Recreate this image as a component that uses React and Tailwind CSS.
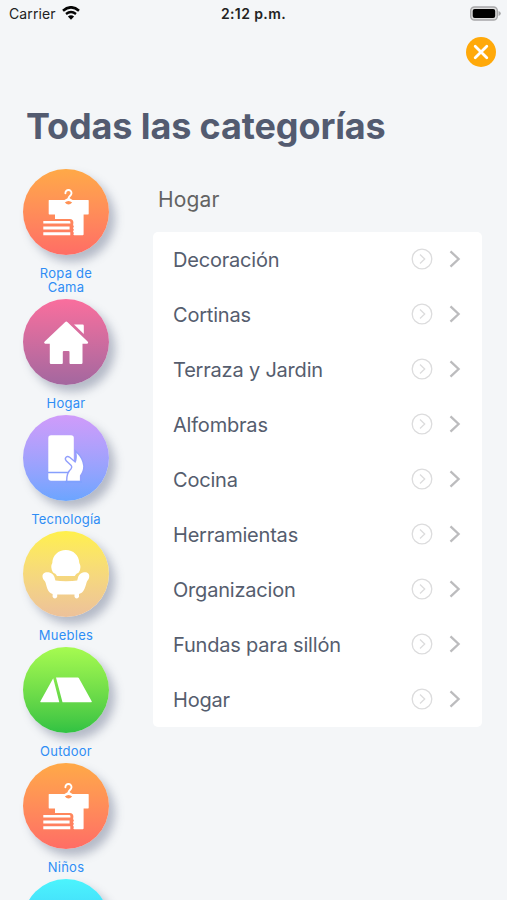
import React from "react";

/* ----------------------------------------------------------------------------------------------------- */
/*  @ Category Icons : drawn on the 86x86 circle
/* ----------------------------------------------------------------------------------------------------- */
const ClothesIcon = () => (
  <svg viewBox="0 0 86 86" className="size-full" fill="#fff">
    <path d="M26 31h39.200q.5 0 .5.500v13.300q0 .6-.6.600h-4.500v19.900q0 .9-.9.900h-8.400q-.9 0-.9-1l.5-1.300-.9-1.500.9-1.600-.9-1.600.9-1.600-.8-1.600.3-2.300q-.1-3.600-3.500-3.600H32v-4.700h-5.700q-.6 0-.6-.6V31.500q0-.5.300-.5z" />
    <path d="M20.300 51.900h25.900q1.200 0 1.200 1.200v1.300H20.300zM20.300 57.400h26.300v3H20.300zM20.300 63.200h27v3h-27z" />
    <path
      d="M42.400 24.200c0-4.500 6.300-4.100 6.100 0-.1 2.900-3 2.800-3.100 5.600l-3.900 2.200"
      fill="none"
      stroke="#fff"
      strokeWidth="1.900"
      strokeLinecap="round"
      strokeLinejoin="round"
    />
    <path d="M45.400 29.600l4.200 2.400" stroke="#fff" strokeWidth="1.700" />
    <path d="M41.800 33.500q3.700-3.200 7.400 0-3.700 4.200-7.400 0z" fill="#ff9154" />
  </svg>
);

const HouseIcon = () => (
  <svg viewBox="0 0 86 86" className="size-full" fill="#fff">
    <path d="M42 23.200q1.300-1.200 2.600 0l20 19.400q1.400 1.900-.8 2.200h-4.300v19q0 1.200-1.200 1.200H47.500q-1 0-1-1V52.900q0-1-1-1h-4.700q-1 0-1 1V64q0 1-1 1H28q-1.200 0-1.200-1.200v-19h-4.500q-2-.5-.6-2.200z" />
    <path d="M51 25.500h8.600q1.200 0 1.200 1.200V35z" />
  </svg>
);

const PhoneIcon = () => (
  <svg viewBox="0 0 86 86" className="size-full" fill="#fff">
    <rect x="25.300" y="20.200" width="25.500" height="45.600" rx="2.800" />
    <path d="M25 57.500h20" stroke="#869ffd" strokeWidth="1.500" />
    {/* hand, outlined in the circle color so it reads in front of the phone */}
    <path
      d="M44.400 65.800q-.2-7.800 4.200-11.600 1.800-2.200.1-4.100l-5-4.900c-1.600-2 .4-4 2.500-2.400l6.200 5.300q2.200-4.300 1.100-10.100 5.900 5.500 6.700 13.100-.1 5.700-3.300 9.400v5.300z"
      stroke="#929ffc"
      strokeWidth="2.800"
      paintOrder="stroke"
    />
    <path d="M42 65.900h17v2H42z" fill="#7fa1fe" />
  </svg>
);

const ArmchairIcon = () => (
  <svg viewBox="0 0 86 86" className="size-full" fill="#fff">
    <path d="M30 41.400q-3.200-5.200-.7-9.300c.2-7.600 6-13 13.500-13s13.300 5.400 13.500 13q2.700 4.300-.5 9.300-3.200 1.100-4 3.700H34q-.8-2.600-4-3.700z" />
    <path d="M19.600 46.400c-1.300-7.200 10.400-6.300 12 .2l.8 2.900q4 .7 10.600.7 7.200 0 11.200-.7l.8-3c1.700-6.500 12.500-7.300 11.200-.2-.3 2.200-2 3-2.700 5.400-1.500 5.200-2.500 9.800-7.500 11.300v2.700q-.6 1.700-2.300 1.700t-2.200-1.700v-2.200H34.200v2.300q-.6 1.600-2.300 1.600t-2.300-1.700V63c-5-1.600-5.600-6.500-7-11.300-.6-2.200-2.600-3.100-3-5.300z" />
  </svg>
);

const TentIcon = () => (
  <svg viewBox="0 0 86 86" className="size-full" fill="#fff">
    <path d="M30.200 31.200L17.300 54.500q-.3.700.5.700h18.500zM33 30.400h21.900q.6 0 .9.500l12.900 23.400q.4.900-.6.900H39.500z" />
  </svg>
);

const CATEGORIES = [
  { name: "Ropa de Cama", Icon: ClothesIcon, color: "from-[#ffa947] to-[#ff6d65]" },
  { name: "Hogar", Icon: HouseIcon, color: "from-[#fa6e9d] to-[#a3679f]" },
  { name: "Tecnología", Icon: PhoneIcon, color: "from-[#d09bfa] to-[#6ba5ff]" },
  { name: "Muebles", Icon: ArmchairIcon, color: "from-[#fff04b] to-[#edc19a]" },
  { name: "Outdoor", Icon: TentIcon, color: "from-[#a6fb50] to-[#2fc243]" },
  { name: "Niños", Icon: ClothesIcon, color: "from-[#ffa947] to-[#ff6d65]" },
  { name: "", Icon: null, color: "from-[#4cf4fd] to-[#38b6f5]" },
];

const SUBCATEGORIES = [
  "Decoración",
  "Cortinas",
  "Terraza y Jardin",
  "Alfombras",
  "Cocina",
  "Herramientas",
  "Organizacion",
  "Fundas para sillón",
  "Hogar",
];

/* ----------------------------------------------------------------------------------------------------- */
/*  @ Status Bar
/* ----------------------------------------------------------------------------------------------------- */
const StatusBar = () => (
  <div className="grid h-[26px] shrink-0 grid-cols-3 items-center pl-[9px] pr-[6px] text-[14px] text-[#222]">
    <div className="flex items-center gap-[6px]">
      <span className="tracking-[0.1px]">Carrier</span>
      <svg width="18" height="14" viewBox="0 0 18 14" fill="none" stroke="#050505">
        <path d="M1 4.700q8-6.800 16 0" strokeWidth="2.600" />
        <path d="M4 8q5-4 10 0" strokeWidth="2.300" />
        <path d="M9 13.700L5.900 10.600q3.100-2.500 6.200 0z" fill="#050505" stroke="none" />
      </svg>
    </div>
    <span className="-ml-[3px] text-center font-semibold tracking-[0.4px]">2:12 p.m.</span>
    <svg className="justify-self-end" width="31" height="15" viewBox="0 0 31 15">
      <rect x=".7" y="1" width="26.600" height="13" rx="3.800" fill="#dedede" stroke="#a7a7a9" strokeWidth="1.400" />
      <rect x="2.700" y="2.900" width="22.500" height="9.200" rx="2" fill="#000" />
      <path d="M28.500 5q2.300.8 2.300 2.500t-2.300 2.500z" fill="#a7a7a9" />
    </svg>
  </div>
);

/* ----------------------------------------------------------------------------------------------------- */
/*  @ Category Button
/* ----------------------------------------------------------------------------------------------------- */
const CategoryButton = ({ name, Icon, color }) => (
  <button className="flex w-[86px] shrink-0 flex-col items-center">
    <span
      className={`block size-[86px] rounded-full bg-linear-to-b shadow-[6px_7px_10px_rgba(70,80,115,0.36)] ${color}`}
    >
      {Icon && <Icon />}
    </span>
    <span className="mt-[12px] mb-[4.500px] w-[70px] text-center text-[13px] leading-[13.500px] tracking-[0.25px] text-[#2f8df5]">
      {name}
    </span>
  </button>
);

/* ----------------------------------------------------------------------------------------------------- */
/*  @ Subcategory Row
/* ----------------------------------------------------------------------------------------------------- */
const SubcategoryRow = ({ label }) => (
  <li className="flex h-[55px] items-center pl-5 pr-[21px]">
    <span className="flex-1 text-[20px] tracking-[-0.2px] text-[#555d6e]">{label}</span>
    <svg className="mb-px" width="22" height="22" viewBox="0 0 22 22" fill="none" stroke="#dcdcdd" strokeWidth="1.300">
      <circle cx="11" cy="11" r="9.800" />
      <path d="M9 6.500l4.700 4.500L9 15.500" />
    </svg>
    <svg className="mb-px ml-[16px]" width="12" height="18" viewBox="0 0 12 18" fill="none" stroke="#bcbcbe" strokeWidth="2.300">
      <path d="M1.500 1.300L9.600 9l-8.100 7.700" />
    </svg>
  </li>
);

export default function App() {
  return (
    <div className="flex h-[900px] w-[507px] flex-col overflow-hidden bg-[#f4f6f8] font-[Inter,sans-serif]">
      <StatusBar />

      <div className="flex justify-end pt-[10.500px] pr-[11px]">
        <button className="flex size-[30px] items-center justify-center rounded-full bg-[#ffa90a]">
          <svg width="16" height="16" viewBox="0 0 16 16" fill="none" stroke="#fff" strokeWidth="2.800" strokeLinecap="round">
            <path d="M2.200 2.200l11.600 11.600M13.800 2.200L2.200 13.800" />
          </svg>
        </button>
      </div>

      <h1 className="mt-[39.500px] pl-[26px] text-[36px] leading-[40px] font-bold tracking-[-0.13px] whitespace-nowrap text-[#535b70]">
        Todas las categorías
      </h1>

      <div className="mt-[23px] flex min-h-0 flex-1">
        <nav className="flex flex-col pl-[23px]">
          {CATEGORIES.map((category, i) => (
            <CategoryButton key={i} {...category} />
          ))}
        </nav>

        <section className="ml-[44px] w-[329px]">
          <h2 className="mt-[15px] pl-[5px] text-[21px] leading-[32px] tracking-[0.15px] text-[#636363]">
            Hogar
          </h2>
          <ul className="mt-[16px] rounded-[5px] bg-white">
            {SUBCATEGORIES.map((label) => (
              <SubcategoryRow key={label} label={label} />
            ))}
          </ul>
        </section>
      </div>
    </div>
  );
}
